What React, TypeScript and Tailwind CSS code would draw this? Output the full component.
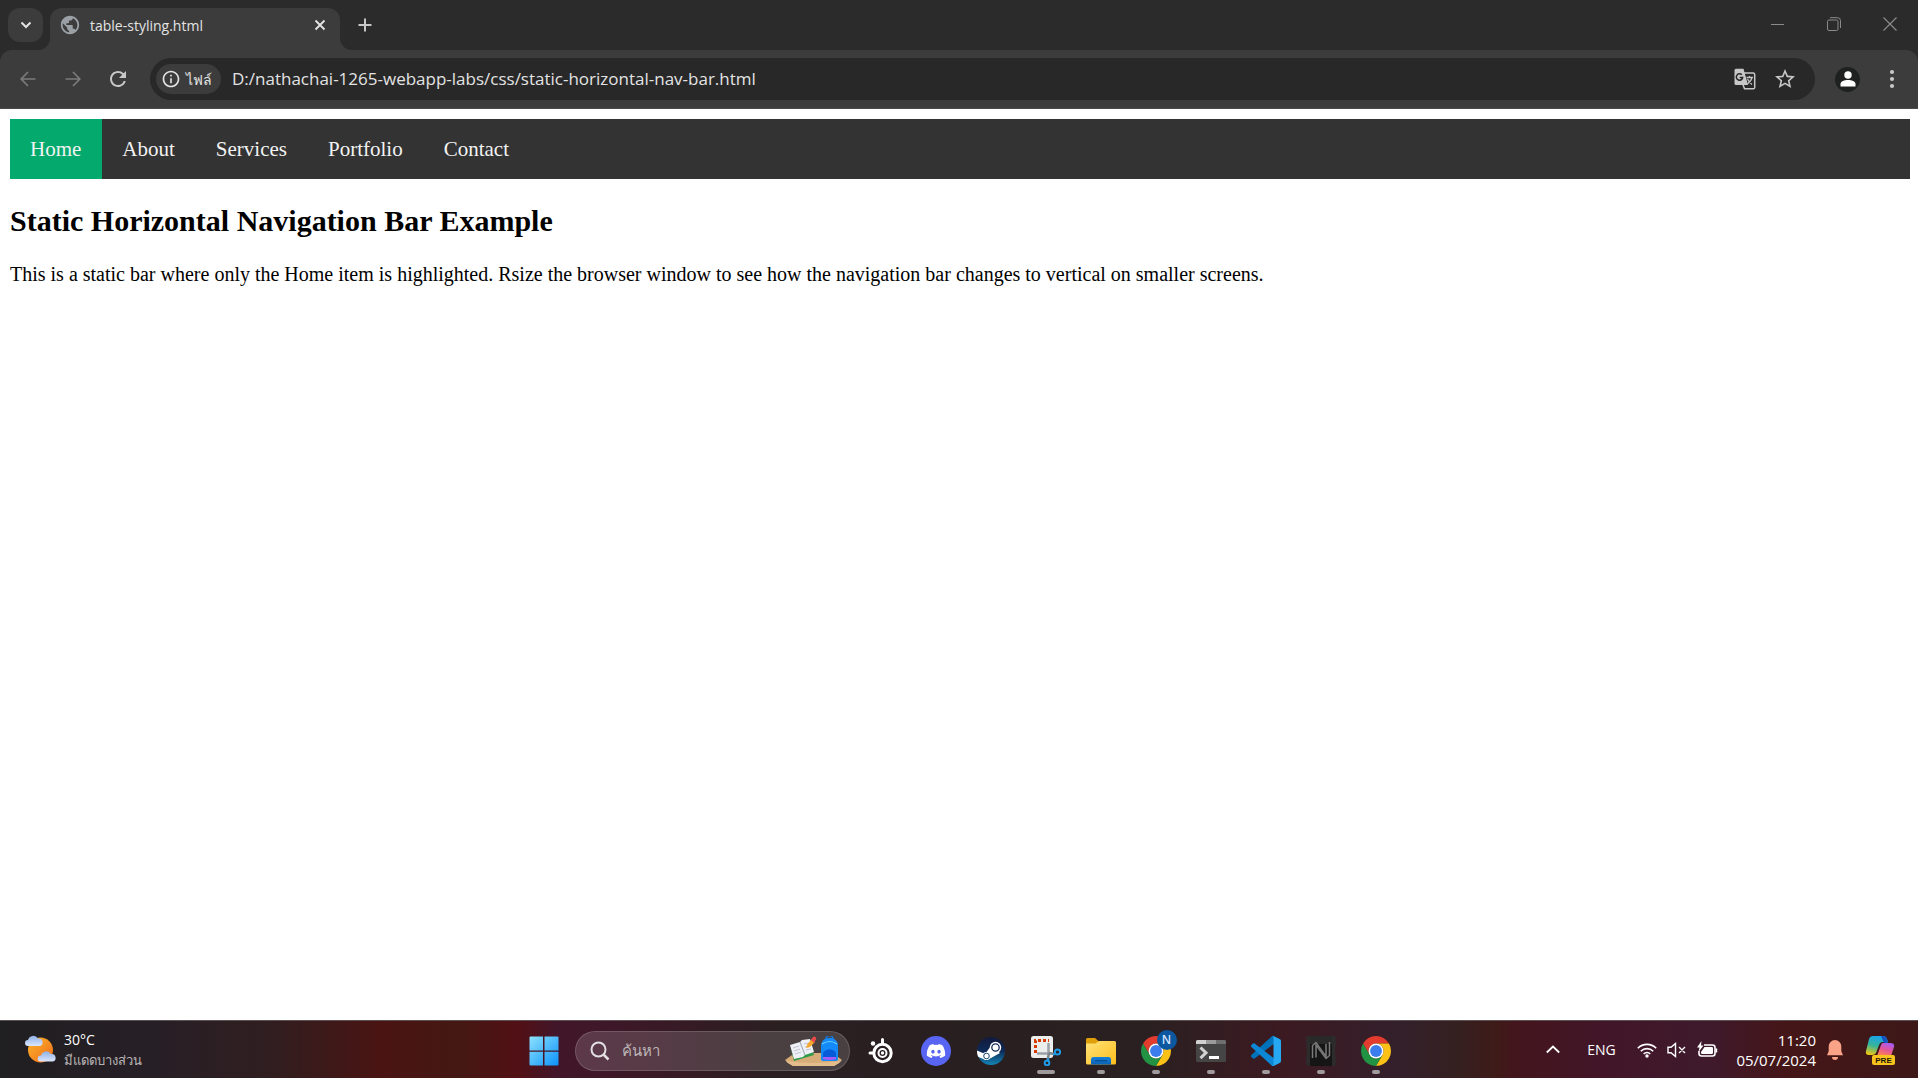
import type { ReactNode } from 'react';
import { FaDiscord } from 'react-icons/fa';
import { MdInfoOutline, MdPublic, MdRefresh, MdStarOutline } from 'react-icons/md';

const NAV_ITEMS = ['Home', 'About', 'Services', 'Portfolio', 'Contact'];

function TabStrip() {
  return (
    <header className="flex h-[50px] items-stretch bg-[#2b2b2b] pl-2">
      <button aria-label="Search tabs" className="mt-2 flex h-[34px] w-[35px] items-center justify-center rounded-xl bg-[#3c3c3c]">
        <svg width="12" height="12" viewBox="0 0 12 12" fill="none" stroke="#e3e3e3" strokeWidth="2"><path d="M1.500 3.500 6 8l4.500-4.500" /></svg>
      </button>
      <div className="relative mt-2 ml-[7px] flex w-[290px] items-center rounded-t-xl bg-[#3c3c3c] pb-2">
        <svg className="absolute bottom-0 -left-3" width="12" height="12" viewBox="0 0 12 12"><path d="M12 0v12H0A12 12 0 0 0 12 0Z" fill="#3c3c3c" /></svg>
        <svg className="absolute -right-3 bottom-0" width="12" height="12" viewBox="0 0 12 12"><path d="M0 0v12h12A12 12 0 0 1 0 0Z" fill="#3c3c3c" /></svg>
        <MdPublic className="ml-[9px] size-[22px] text-[#9aa0a6]" />
        <span className="ml-[9px] flex-1 text-[14px] text-[#e3e3e3]">table-styling.html</span>
        <button aria-label="Close tab" className="mr-[14px] flex size-3 items-center justify-center">
          <svg width="12" height="12" viewBox="0 0 12 12" stroke="#e3e3e3" strokeWidth="1.900"><path d="m1.500 1.500 9 9m0-9-9 9" /></svg>
        </button>
      </div>
      <button aria-label="New tab" className="mt-2 ml-2 flex size-[34px] items-center justify-center">
        <svg width="14" height="14" viewBox="0 0 14 14" stroke="#c7c7c7" strokeWidth="2"><path d="M7 .5v13M.5 7h13" /></svg>
      </button>
      <div className="ml-auto flex items-start">
        <button aria-label="Minimize" className="flex h-12 w-14 items-center justify-center">
          <svg width="14" height="14" viewBox="0 0 14 14" stroke="#8a8a8a"><path d="M0 7.500h13" /></svg>
        </button>
        <button aria-label="Restore" className="flex h-12 w-14 items-center justify-center">
          <svg width="14" height="14" viewBox="0 0 14 14" fill="none" stroke="#8a8a8a"><rect x=".5" y="3" width="10.500" height="10.500" rx="1.500" /><path d="M3 .7h7.500a3 3 0 0 1 3 3V11" /></svg>
        </button>
        <button aria-label="Close" className="flex h-12 w-14 items-center justify-center">
          <svg width="14" height="14" viewBox="0 0 14 14" stroke="#8a8a8a" strokeWidth="1.200"><path d="m.5.5 13 13m0-13-13 13" /></svg>
        </button>
      </div>
    </header>
  );
}

function Toolbar() {
  return (
    <div className="bg-[#2b2b2b]">
      <div className="flex h-[59px] items-center rounded-t-xl border-b border-[#4a4a4a] bg-[#3c3c3c] pl-[5px]">
        <button aria-label="Back" className="flex size-[45px] items-center justify-center">
          <svg width="16" height="16" viewBox="0 0 16 16" fill="none" stroke="#7b7b7b" strokeWidth="1.700"><path d="M15.500 8H1.500M8 1 1.200 8 8 15" /></svg>
        </button>
        <button aria-label="Forward" className="flex size-[45px] items-center justify-center">
          <svg width="16" height="16" viewBox="0 0 16 16" fill="none" stroke="#7b7b7b" strokeWidth="1.700"><path d="M.5 8h14M8 1l6.800 7L8 15" /></svg>
        </button>
        <button aria-label="Reload" className="flex size-[45px] items-center justify-center"><MdRefresh className="size-6 text-[#c7c7c7]" /></button>
        <div className="ml-[10px] flex h-[42px] flex-1 items-center rounded-full bg-[#282828] pr-[18px] pl-[6px]">
          <button className="flex h-[30px] w-[65px] items-center rounded-full bg-[#3c3c3c] pl-[5px] text-[14px] text-[#e3e3e3]">
            <MdInfoOutline className="mr-[5px] size-5 shrink-0" />ไฟล์
          </button>
          <input aria-label="Address" defaultValue="D:/nathachai-1265-webapp-labs/css/static-horizontal-nav-bar.html" className="ml-[11px] min-w-0 flex-1 bg-transparent text-[17px] text-[#e3e3e3] outline-none" />
          <button aria-label="Translate this page" className="mr-[17px]">
            <svg width="22" height="22" viewBox="0 0 22 22" fill="none">
              <path d="M9 5h10.300A1.400 1.400 0 0 1 20.700 6.400v13a1.400 1.400 0 0 1-1.400 1.400H10.500L8 14" stroke="#c7c7c7" strokeWidth="1.500" />
              <path d="M2 .8h7.500L14 17H2A1.500 1.500 0 0 1 .5 15.500V2.300A1.500 1.500 0 0 1 2 .8Z" fill="#c7c7c7" />
              <path d="M7.800 6.800A3.200 3.200 0 1 0 8.700 9.400H5.700" stroke="#282828" strokeWidth="1.500" />
              <path d="M12.500 9.500h6.500M15.500 8v1.500M18 9.500c-.5 2.500-2.500 5-4.500 6.500M13.500 11c1 2 2.500 4 4.500 5.500" stroke="#c7c7c7" strokeWidth="1.300" />
            </svg>
          </button>
          <button aria-label="Bookmark this tab"><MdStarOutline className="size-6 text-[#c7c7c7]" /></button>
        </div>
        <button aria-label="Profile" className="ml-5 flex size-[25px] items-center justify-center rounded-full bg-[#1f2121]">
          <svg width="16" height="16" viewBox="0 0 16 16" fill="#fff"><circle cx="8" cy="4" r="3.700" /><path d="M.5 15.500V13c0-2.600 4-4 7.500-4s7.500 1.400 7.500 4v2.500Z" /></svg>
        </button>
        <button aria-label="Menu" className="mr-[15px] ml-[21px] flex h-6 w-[22px] items-center justify-center">
          <svg width="6" height="20" viewBox="0 0 6 20" fill="#c7c7c7"><circle cx="3" cy="3" r="2.100" /><circle cx="3" cy="10" r="2.100" /><circle cx="3" cy="17" r="2.100" /></svg>
        </button>
      </div>
    </div>
  );
}

function PageContent() {
  return (
    <main className='flex-1 bg-white pt-[10px] pr-2 pl-[10px] font-["Liberation_Serif",serif] text-black'>
      <nav className="flex bg-[#333]">
        {NAV_ITEMS.map((item) => (
          <a
            key={item}
            href={`#${item.toLowerCase()}`}
            className={`py-[18px] pr-[21px] pl-5 text-[21px] leading-6 text-[#f2f2f2] ${item === 'Home' ? 'bg-[#04aa6d]' : ''}`}
          >
            {item}
          </a>
        ))}
      </nav>
      <h2 className="mt-[25px] text-[30px] leading-[34px] font-bold">Static Horizontal Navigation Bar Example</h2>
      <p className="mt-6 text-[20px] leading-6">This is a static bar where only the Home item is highlighted. Rsize the browser window to see how the navigation bar changes to vertical on smaller screens.</p>
    </main>
  );
}

function WeatherIcon() {
  return (
    <svg width="31" height="31" viewBox="0 0 31 31">
      <defs>
        <linearGradient id="sun" x1="0" y1="0" x2="1" y2="1"><stop stopColor="#fbb62a" /><stop offset="1" stopColor="#f06a1c" /></linearGradient>
        <linearGradient id="cloud" x1="0" y1="0" x2="0" y2="1"><stop stopColor="#8fb0e8" /><stop offset="1" stopColor="#dbe6fb" /></linearGradient>
      </defs>
      <circle cx="15.500" cy="16" r="12.500" fill="url(#sun)" />
      <path d="M3 12a3 3 0 0 1 0-6A5.500 5.500 0 0 1 13 4.500a3.800 3.800 0 0 1 1.500 7.500Z" fill="url(#cloud)" />
      <path d="M15.500 27.500a3 3 0 0 1 .5-6 5.500 5.500 0 0 1 10-1.500 3.800 3.800 0 0 1 1.500 7.500Z" fill="url(#cloud)" />
    </svg>
  );
}

function StartIcon() {
  return (
    <svg width="30" height="30" viewBox="0 0 30 30">
      <defs><linearGradient id="win" gradientUnits="userSpaceOnUse" x1="0" y1="0" x2="30" y2="30"><stop stopColor="#8fe3ff" /><stop offset="1" stopColor="#0a91f8" /></linearGradient></defs>
      <path fill="url(#win)" d="M1.500.5H14v14H.5v-13a1 1 0 0 1 1-1ZM15.500.5h13a1 1 0 0 1 1 1v13h-14ZM.5 15.800H14v13.700H1.500a1 1 0 0 1-1-1ZM15.500 15.800h14v12.700a1 1 0 0 1-1 1h-13Z" />
    </svg>
  );
}

function SearchArt() {
  return (
    <svg className="mt-1" width="58" height="34" viewBox="0 0 58 34">
      <path d="M0 24 10 17h38l9 7-3 3-5 3H8l-5-3Z" fill="#d7ac78" />
      <path d="M1 25q28 4 55 0l-2 2-5 3H8l-5-3Z" fill="#e3bd8c" />
      <path d="m5 11 4 14 20-6-1-4L9 22Z" fill="#2f9a4a" />
      <path d="m5 9 10-3 2-2 8-1 4 13-9 3-2 2-9 2Z" fill="#eef0f6" />
      <path d="m15 6 5 13" stroke="#9ba0b0" fill="none" />
      <path d="m8 12 6-2m-5 5 6-2m-5 5 6-2m3-8 5-1m-4 4 5-1m-4 4 5-1" stroke="#b5b8c4" strokeWidth=".8" />
      <path d="m21 12 1.500-4L27 3l3 3-5 5Z" fill="#f6a72c" /><path d="m26 4 2-3a2 2 0 0 1 3 2.500L29 7Z" fill="#e84a4a" />
      <path d="M41 3a3.500 3.500 0 0 1 7 0" fill="none" stroke="#1b76dd" strokeWidth="1.500" />
      <path d="M36 23V10c0-11 17-11 17 0v13a2 2 0 0 1-2 2H38a2 2 0 0 1-2-2Z" fill="#148af8" />
      <path d="M37 8q8-5 15 0" fill="none" stroke="#69cffb" strokeWidth="1.200" />
      <path d="M38 22v-4c0-6 13-6 13 0v4Z" fill="#075bd8" /><path d="M38 21h13v2q-6 2-13 0Z" fill="#a45cf4" />
    </svg>
  );
}

function SteelSeriesIcon() {
  return (
    <svg width="26" height="26" viewBox="0 0 26 26">
      <circle cx="14.500" cy="15" r="8.700" fill="none" stroke="#fff" strokeWidth="3" />
      <circle cx="14.500" cy="15" r="4" fill="none" stroke="#fff" strokeWidth="2" />
      <circle cx="14.500" cy="15" r="1.700" fill="#fff" />
      <path d="M13 7V1.500a1.500 1.500 0 0 1 3 0V7ZM7 13.500H2a1.500 1.500 0 0 0 0 3h5Z" fill="#fff" />
      <circle cx="5" cy="5.500" r="2.200" fill="#fff" />
    </svg>
  );
}

function DiscordIcon() {
  return <span className="flex size-[30px] items-center justify-center rounded-full bg-[#5865f2]"><FaDiscord className="size-5 text-white" /></span>;
}

function SteamIcon() {
  return (
    <svg width="30" height="30" viewBox="0 0 30 30">
      <defs>
        <linearGradient id="steam" x1="0" y1="0" x2="0" y2="1"><stop stopColor="#131a3d" /><stop offset=".5" stopColor="#0e2a56" /><stop offset="1" stopColor="#1387b8" /></linearGradient>
        <clipPath id="steamDisc"><circle cx="15" cy="15" r="14" /></clipPath>
      </defs>
      <circle cx="15" cy="15" r="14" fill="url(#steam)" />
      <g clipPath="url(#steamDisc)">
        <path d="m0 14 9 4 6-8 9 7-9 5-5 2-10-4Z" fill="#fff" />
        <circle cx="10.500" cy="20" r="4" fill="#fff" /><circle cx="10.500" cy="20" r="2.800" fill="none" stroke="#17486f" strokeWidth="1" />
      </g>
      <circle cx="19.500" cy="11.500" r="5.700" fill="#fff" />
      <circle cx="19.500" cy="11.500" r="3.700" fill="none" stroke="#132a55" strokeWidth="1.300" />
    </svg>
  );
}

function SnippingIcon() {
  return (
    <svg width="30" height="30" viewBox="0 0 30 30" fill="none">
      <rect width="22" height="22" rx="2.500" fill="#eceded" />
      <path d="M4.500 17V4.500H18" stroke="#d83b01" strokeWidth="3" strokeDasharray="3 2" />
      <path d="M17.500 7v12M6 17.500h12" stroke="#9aa1a8" strokeWidth="2.500" />
      <path d="m17.500 17 6 1M18 17.500 16.500 24" stroke="#7b858e" strokeWidth="2.500" />
      <circle cx="26.500" cy="16" r="2.600" stroke="#1e9be9" strokeWidth="2" /><circle cx="16" cy="27" r="2.300" stroke="#1e9be9" strokeWidth="2" />
      <path d="m22 19 2.500-1.500M17.300 22v3" stroke="#1e9be9" strokeWidth="2" />
    </svg>
  );
}

function FolderIcon() {
  return (
    <svg width="30" height="30" viewBox="0 0 30 30">
      <defs>
        <linearGradient id="folder" x1="0" y1="0" x2="1" y2="1"><stop stopColor="#ffe27a" /><stop offset="1" stopColor="#fdbe1a" /></linearGradient>
        <linearGradient id="folderTray" x1="0" y1="0" x2="0" y2="1"><stop stopColor="#1680d8" /><stop offset="1" stopColor="#0a62b4" /></linearGradient>
      </defs>
      <path d="M0 3.500A1.500 1.500 0 0 1 1.500 2H9l4 3.500V10H0Z" fill="#e0a00a" />
      <path d="M0 7.500h9.500L13 5h15.500A1.500 1.500 0 0 1 30 6.500V27a1.500 1.500 0 0 1-1.500 1.500h-27A1.500 1.500 0 0 1 0 27Z" fill="url(#folder)" />
      <path d="M5 28.500V23.500A2.500 2.500 0 0 1 7.500 21h15a2.500 2.500 0 0 1 2.500 2.500v5Z" fill="url(#folderTray)" />
      <path d="M9 24.700h12" stroke="#064c91" strokeWidth="1.200" />
    </svg>
  );
}

function ChromeIcon() {
  return (
    <svg width="30" height="30" viewBox="0 0 48 48">
      <path d="M24 12H44.780A24 24 0 0 0 3.220 12L13.610 30A12 12 0 0 1 24 12Z" fill="#e33b2e" />
      <path d="M44.780 12A24 24 0 0 1 24 48L34.390 30A12 12 0 0 0 24 12Z" fill="#fbc116" />
      <path d="M3.220 12A24 24 0 0 0 24 48L34.390 30A12 12 0 0 1 13.610 30Z" fill="#229342" />
      <circle cx="24" cy="24" r="12" fill="#fff" /><circle cx="24" cy="24" r="9.500" fill="#3b7ded" />
    </svg>
  );
}

function ProfileChromeIcon() {
  return (
    <span className="relative">
      <ChromeIcon />
      <span className="absolute -top-[6px] -right-[6px] flex size-5 items-center justify-center rounded-full bg-[#0b57a0] text-[12px] leading-none font-semibold text-[#d3e3fd]">N</span>
    </span>
  );
}

function TerminalIcon() {
  return (
    <svg width="30" height="30" viewBox="0 0 30 30">
      <rect y="4" width="30" height="22" rx="1.500" fill="#454545" />
      <path d="M1.500 4H10v4H0V5.500A1.500 1.500 0 0 1 1.500 4Z" fill="#d0d0d0" /><path d="M10 4h10v4H10Z" fill="#9b9b9b" /><path d="M20 4h8.500A1.500 1.500 0 0 1 30 5.500V8H20Z" fill="#6f6f6f" />
      <path d="m4.500 11.500 5.500 5.300-5.500 5.300" fill="none" stroke="#d2d2d2" strokeWidth="3" /><path d="M13 20h10v3H13Z" fill="#fff" />
    </svg>
  );
}

function CodeIcon() {
  return (
    <svg width="30" height="30" viewBox="0 0 100 100">
      <path fill="#0072ba" d="M96.460 10.800 75.860.88C73.470-.27 70.620.21 68.750 2.080L1.300 63.580c-1.810 1.650-1.810 4.510 0 6.160l5.510 5.010c1.490 1.350 3.720 1.450 5.320.23L93.360 13.370C96.090 11.300 100 13.240 100 16.670v-.24c0-2.400-1.380-4.590-3.540-5.630z" />
      <path fill="#0c87d6" d="M96.460 89.200 75.860 99.120c-2.390 1.150-5.240.67-7.110-1.200L1.300 36.420c-1.810-1.650-1.810-4.510 0-6.160l5.510-5.010c1.490-1.350 3.720-1.450 5.320-.23l81.230 61.610c2.730 2.070 6.640.13 6.640-3.300v.24c0 2.400-1.380 4.590-3.540 5.630z" />
      <path fill="#27a8f2" d="M75.860 99.130c-2.390 1.150-5.240.66-7.110-1.210C71.060 100.220 75 98.590 75 95.330V4.670c0-3.260-3.940-4.890-6.250-2.590C70.620.21 73.470-.28 75.860.87L96.460 10.780C98.620 11.820 100 14.010 100 16.410v67.180c0 2.400-1.380 4.590-3.540 5.630z" />
    </svg>
  );
}

function NitroIcon() {
  return (
    <svg width="30" height="30" viewBox="0 0 30 30">
      <path d="M1 0h28l1 4-1 11 1 11-1 4H1l-1-4 1-11L0 4Z" fill="#2c2c2d" />
      <path d="M4 0h22v30H4Z" fill="#151516" /><path d="M4 0h22v8H4Z" fill="#292929" />
      <path d="M6.500 22V9.500L10 6.500l10 14V8" fill="none" stroke="#7a7a7a" strokeWidth="1.500" />
      <path d="M23.500 6v13.500L20 22.500 10 9v12.500" fill="none" stroke="#7a7a7a" strokeWidth="1.500" />
    </svg>
  );
}

const APPS: { name: string; icon: ReactNode; state: 'closed' | 'open' | 'active' }[] = [
  { name: 'SteelSeries GG', icon: <SteelSeriesIcon />, state: 'closed' },
  { name: 'Discord', icon: <DiscordIcon />, state: 'closed' },
  { name: 'Steam', icon: <SteamIcon />, state: 'closed' },
  { name: 'Snipping Tool', icon: <SnippingIcon />, state: 'active' },
  { name: 'File Explorer', icon: <FolderIcon />, state: 'open' },
  { name: 'Chrome profile N', icon: <ProfileChromeIcon />, state: 'open' },
  { name: 'Terminal', icon: <TerminalIcon />, state: 'open' },
  { name: 'Visual Studio Code', icon: <CodeIcon />, state: 'open' },
  { name: 'NitroSense', icon: <NitroIcon />, state: 'open' },
  { name: 'Chrome', icon: <ChromeIcon />, state: 'open' },
];

const INDICATORS = {
  closed: 'hidden',
  open: 'absolute bottom-1 h-1 w-2 rounded-full bg-[#a09a9c]',
  active: 'absolute bottom-1 h-1 w-[18px] rounded-full bg-[#a09a9c]',
};

function SystemTray() {
  return (
    <div className="flex items-center justify-end text-white">
      <button aria-label="Show hidden icons" className="flex h-10 w-8 items-center justify-center">
        <svg width="14" height="9" viewBox="0 0 14 9" fill="none" stroke="#fff" strokeWidth="1.800"><path d="m.8 7.500 6.200-6 6.200 6" /></svg>
      </button>
      <button className="ml-[17px] w-[30px] text-[14px]">ENG</button>
      <button aria-label="Network, volume and battery" className="ml-[21px] flex items-center">
        <svg width="20" height="16" viewBox="0 0 20 16" fill="none" stroke="#fff" strokeWidth="1.600"><path d="M.8 6.200a13 13 0 0 1 18.400 0M3.800 9.200a8.800 8.800 0 0 1 12.400 0M6.700 12a4.700 4.700 0 0 1 6.600 0" /><circle cx="10" cy="14" r="1.700" fill="#fff" stroke="none" /></svg>
        <svg className="ml-[10px]" width="20" height="16" viewBox="0 0 20 16" fill="none" stroke="#fff" strokeWidth="1.400"><path d="M1 5.300h3L8.500 1.500v13L4 10.700H1ZM12 5l6 6m0-6-6 6" /></svg>
        <svg className="ml-[10px]" width="21" height="18" viewBox="0 0 21 18" fill="none"><path d="M7 4h8.500A2.500 2.500 0 0 1 18 6.500v6a2.500 2.500 0 0 1-2.500 2.500h-11A2.500 2.500 0 0 1 2 12.500V10" stroke="#fff" strokeWidth="1.600" /><path d="M7.500 6h7.300A1.200 1.200 0 0 1 16 7.200v4.600a1.200 1.200 0 0 1-1.200 1.200H5.200A1.200 1.200 0 0 1 4 11.800V11ZM18.500 7.500h1.700v4h-1.700ZM4.500 0 0 6.500h2.500L1.500 11 6.500 4.500H4Z" fill="#fff" /></svg>
      </button>
      <button className="ml-[18px] text-right text-[15px] leading-5">
        <time className="block">11:20</time>
        <time className="block">05/07/2024</time>
      </button>
      <button aria-label="Notifications" className="ml-[11px]">
        <svg width="16" height="20" viewBox="0 0 16 20" fill="#fba386"><path d="M8 0a6.300 6.300 0 0 1 6.300 6.500v4.700l1.700 4H0l1.700-4V6.500A6.300 6.300 0 0 1 8 0ZM5 17h6a3 3 0 0 1-6 0Z" /></svg>
      </button>
      <button aria-label="Copilot preview" className="mr-[23px] ml-[22px] flex flex-col items-center">
        <svg width="30" height="30" viewBox="0 0 30 30">
          <defs>
            <linearGradient id="copLeft" x1=".5" y1="0" x2=".2" y2="1"><stop stopColor="#1ba4ea" /><stop offset=".5" stopColor="#35b49a" /><stop offset="1" stopColor="#f4c80c" /></linearGradient>
            <linearGradient id="copRight" x1=".7" y1="0" x2=".3" y2="1"><stop stopColor="#a75cf5" /><stop offset=".5" stopColor="#e2559a" /><stop offset="1" stopColor="#ff8748" /></linearGradient>
          </defs>
          <path d="M8 1h10q3 0 4 3l1 3h-5q-3 0-4 3l-3 8q-1 2-4 2H4q-4 0-3-4L4 4q1-3 4-3Z" fill="url(#copLeft)" />
          <path d="M16 1h2q3 0 4 3l1 4h-4Z" fill="#1553c0" />
          <path d="M18 8h7q5 0 4 4l-3 9H12l4-11q.700-2 2-2Z" fill="url(#copRight)" />
          <rect x="7" y="20" width="23" height="10" rx="2" fill="#f8c31c" />
          <text x="18.500" y="28" textAnchor="middle" fontSize="8" fontWeight="700" fontFamily="Liberation Sans, sans-serif" fill="#1b1608">PRE</text>
        </svg>
      </button>
    </div>
  );
}

function Taskbar() {
  return (
    <footer className="grid h-[58px] grid-cols-[1fr_auto_1fr] border-t border-[#5a5052] bg-[linear-gradient(90deg,#201f21_0%,#271f26_8%,#301e20_14%,#4a1412_20%,#441813_24%,#521015_27%,#42162a_29%,#3a1926_34%,#2b1f22_40%,#281f21_50%,#2b2021_60%,#3c1a22_67%,#33202b_73%,#352020_76%,#3e1b18_78%,#43151d_79%,#421629_84%,#3e1a2c_89%,#451618_93%,#3d1818_100%)]">
      <button className="flex items-center pl-[25px] text-left">
        <WeatherIcon />
        <span className="ml-2 flex flex-col text-[14px] leading-5 text-white">
          <span>30°C</span>
          <span className="text-[13px] text-[#b9b5b6]">มีแดดบางส่วน</span>
        </span>
      </button>
      <div className="flex items-center pl-px">
        <button aria-label="Start" className="flex h-full w-[55px] items-center justify-center pt-0.5"><StartIcon /></button>
        <label className="mt-0.5 mr-[3px] ml-1 flex h-10 w-[275px] items-center rounded-full border border-white/15 bg-white/15 pr-[6px] pl-[14px]">
          <svg width="20" height="20" viewBox="0 0 20 20" fill="none" stroke="#e2dfe0" strokeWidth="2"><circle cx="8.500" cy="8.500" r="7" /><path d="m13.500 13.500 5 5" strokeWidth="2.500" /></svg>
          <input aria-label="Search" placeholder="ค้นหา" className="ml-3 min-w-0 flex-1 bg-transparent text-[15px] text-white outline-none placeholder:text-[#bdb6b8]" />
          <SearchArt />
        </label>
        {APPS.map((app) => (
          <button key={app.name} aria-label={app.name} className="relative flex h-full w-[55px] items-center justify-center pt-0.5">
            {app.icon}
            <span className={INDICATORS[app.state]} />
          </button>
        ))}
      </div>
      <SystemTray />
    </footer>
  );
}

export default function App() {
  return (
    <div className='flex min-h-screen flex-col font-["Open_Sans","Noto_Sans",sans-serif]'>
      <TabStrip />
      <Toolbar />
      <PageContent />
      <Taskbar />
    </div>
  );
}
